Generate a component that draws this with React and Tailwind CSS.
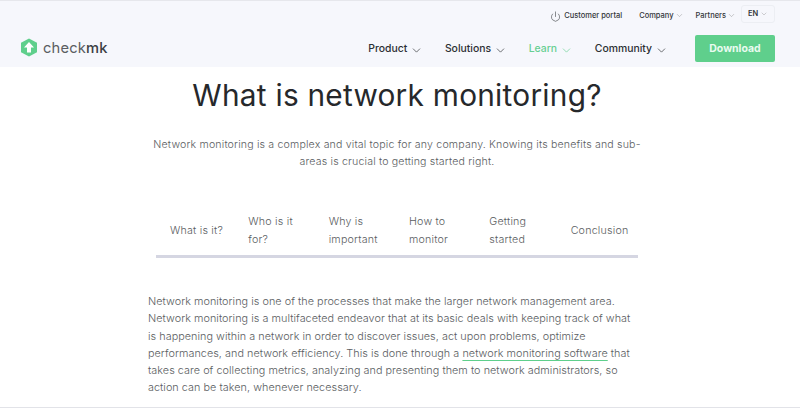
import { ChevronDown, Power } from 'lucide-react'

const tabs = [
  ['What is it?', 'pl-[14px]'],
  ['Who is it for?', 'pl-[12px] pr-[10px]'],
  ['Why is important', 'pl-[12px] pr-[10px]'],
  ['How to monitor', 'pl-[12px] pr-[10px]'],
  ['Getting started', 'pl-[12px] pr-[10px]'],
  ['Conclusion', 'pl-[13px]'],
]

function Logo() {
  return (
    <div className="flex items-center gap-[5px]">
      <svg width="18" height="19" viewBox="0 0 18 19">
        <path d="M9 0.500 17 4.800v9.400L9 18.500 1 14.200V4.800z" fill="#5fcf8c" />
        <path d="M9 4 14 9.500H11V14.500H7V9.500H4z" fill="#fff" />
      </svg>
      <span className="mt-[1px] text-[14.700px] text-[#5b5e62] tracking-[0.2px]">
        check<span className="font-medium text-[#3c3f44]">mk</span>
      </span>
    </div>
  )
}

function NavItem({ label, green }) {
  return (
    <div className={`flex items-center gap-[3px] text-[10.400px] font-medium ${green ? 'text-[#67cf92]' : 'text-[#2c2f33]'}`}>
      {label}
      <ChevronDown size={13} strokeWidth={1.25} className="mt-[3px]" />
    </div>
  )
}

export default function App() {
  return (
    <div className="w-[800px] h-[408px] overflow-hidden bg-white text-[#5a5d61] font-['Inter',sans-serif] flex flex-col">
      <header className="bg-[#f6f7fc] border-t border-[#e6e7ec] h-[67px] shrink-0">
        <div className="h-[28px] flex items-center justify-end pr-[25px] text-[7.500px] font-medium text-[#33363a]">
          <Power size={11} strokeWidth={1.25} className="mr-[3px] mt-[3px]" />
          <span className="mt-[1px] mr-[17px]">Customer portal</span>
          <span className="mt-[1px]">Company</span>
          <ChevronDown size={9} strokeWidth={1} className="ml-[1px] mr-[12px] mt-[1px] text-[#777]" />
          <span className="mt-[1px]">Partners</span>
          <ChevronDown size={9} strokeWidth={1} className="ml-[1px] mr-[5px] mt-[1px] text-[#777]" />
          <div className="w-[34px] h-[18px] mb-[2px] border border-[#eceef3] rounded-[3px] flex items-center justify-center gap-[2px] font-semibold">
            EN
            <ChevronDown size={8} strokeWidth={1} className="text-[#777]" />
          </div>
        </div>
        <div className="h-[38px] flex items-center pl-[20px] pr-[25px]">
          <Logo />
          <nav className="ml-auto mt-[2px] flex items-center gap-[21.700px]">
            <NavItem label="Product" />
            <NavItem label="Solutions" />
            <NavItem label="Learn" green />
            <NavItem label="Community" />
          </nav>
          <div className="ml-[27px] w-[80px] h-[27px] pt-[1px] rounded-[2px] bg-[#5fcf8c] flex items-center justify-center text-[10.500px] font-bold text-[#e9fbf0]">
            Download
          </div>
        </div>
      </header>

      <main className="flex-1 flex flex-col items-center pr-[6px]">
        <h1 className="text-[29.800px] leading-[40px] mt-[8px] font-normal text-[#26282b] tracking-[0.25px]">What is network monitoring?</h1>
        <p className="mt-[21px] text-[10.600px] leading-[17px] text-center font-light tracking-[0.17px] whitespace-nowrap">
          Network monitoring is a complex and vital topic for any company. Knowing its benefits and sub-<br />
          areas is crucial to getting started right.
        </p>
        <div className="mt-[35px] w-[482px] h-[53px] pt-[2px] flex items-center border-b-[3px] border-[#d5d6e2]">
          {tabs.map(([label, pad]) => (
            <div key={label} className={`w-[80.330px] ${pad} text-[10.700px] leading-[18px] font-light tracking-[0.2px]`}>
              {label}
            </div>
          ))}
        </div>
        <p className="mt-[35px] w-[498px] text-[10.800px] leading-[17.300px] font-light tracking-[0.05px] whitespace-nowrap">
          Network monitoring is one of the processes that make the larger network management area.<br />
          Network monitoring is a multifaceted endeavor that at its basic deals with keeping track of what<br />
          is happening within a network in order to discover issues, act upon problems, optimize<br />
          performances, and network efficiency. This is done through a{' '}
          <span className="underline decoration-[#5fcf8c] underline-offset-[3px]">network monitoring software</span> that<br />
          takes care of collecting metrics, analyzing and presenting them to network administrators, so<br />
          action can be taken, whenever necessary.
        </p>
      </main>
      <div className="h-px bg-[#e2e3e8] shrink-0" />
    </div>
  )
}
